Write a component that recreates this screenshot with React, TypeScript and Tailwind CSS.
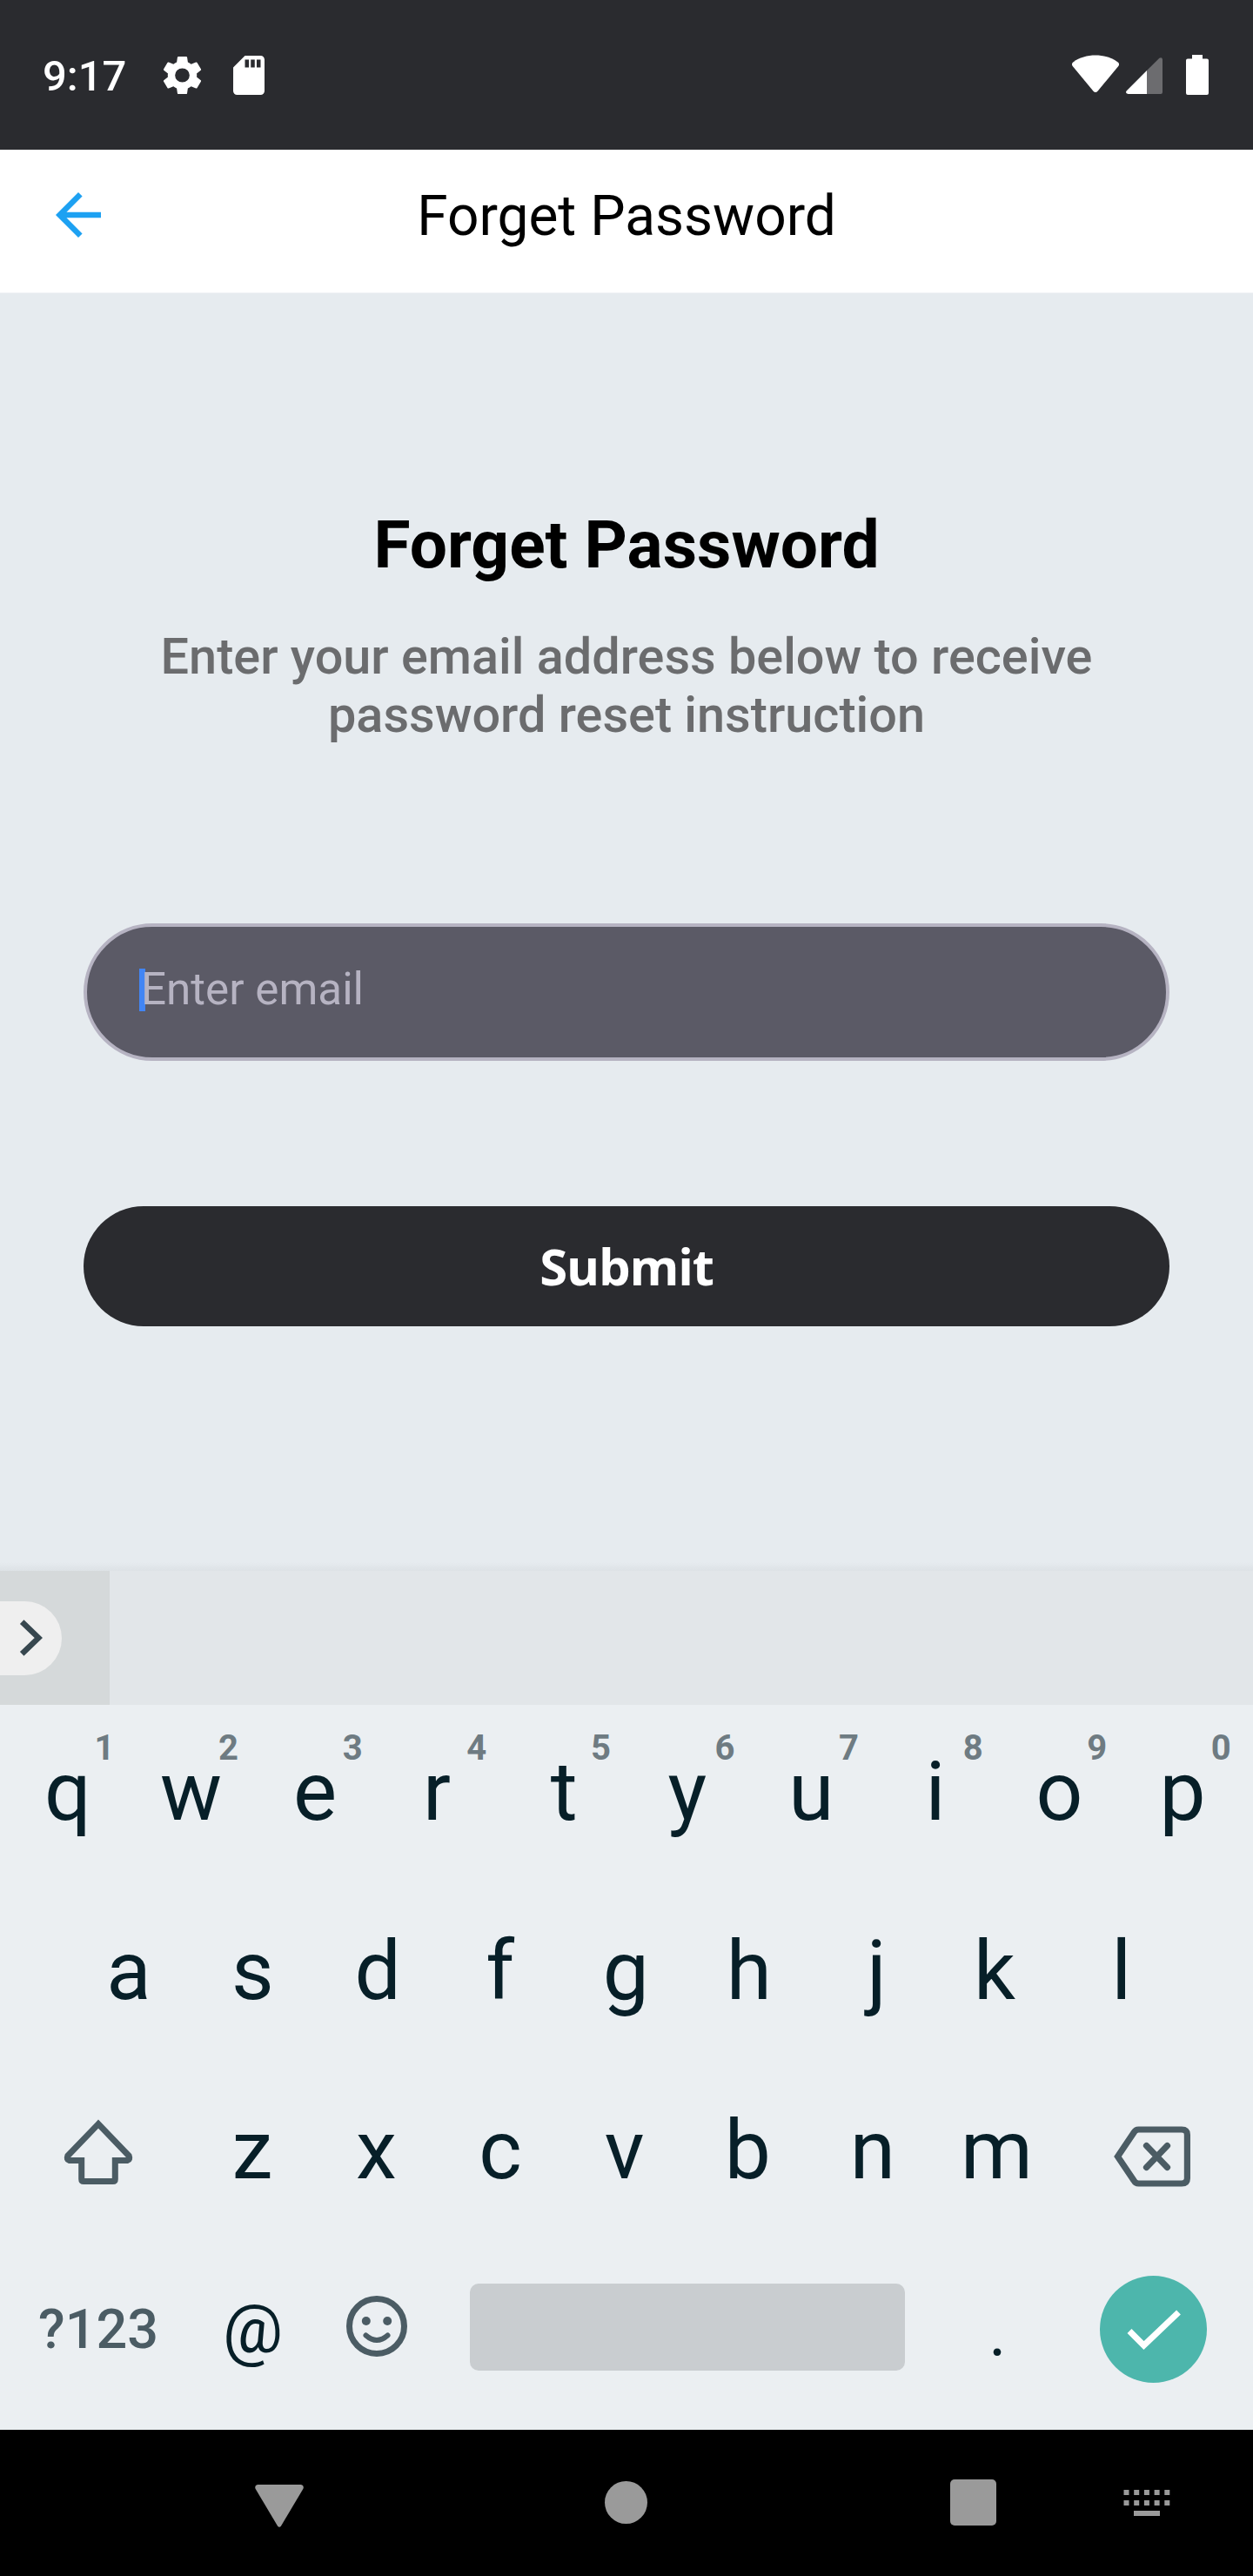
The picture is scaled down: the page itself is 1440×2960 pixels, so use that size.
import type { ReactNode } from "react";

const TOP_ROW = "qwertyuiop".split("");
const MIDDLE_ROW = "asdfghjkl".split("");
const BOTTOM_ROW = "zxcvbnm".split("");

const NUDGE: Record<string, string> = {
  q: "translate-x-[1px]",
  r: "-translate-x-[2.5px]",
  t: "translate-x-[1px]",
  d: "translate-x-[1px]",
  f: "-translate-x-[1px]",
  g: "translate-x-[1px]",
  j: "translate-x-[4px]",
  k: "-translate-x-[3px]",
  b: "-translate-x-[1px]",
  p: "-translate-x-[1px]",
};

function StatusBar() {
  return (
    <div className="flex h-[172px] items-start bg-[#2a2b2f] pl-[49px] pr-[51px] text-white">
      <span className="mt-[59px] w-[138px] text-[49px] font-medium leading-[58px]">9:17</span>
      <svg className="mt-[64px] h-[45px] w-[45px]" viewBox="2.3 2 19.4 20" preserveAspectRatio="none" fill="currentColor">
        <path d="M19.14 12.94c.04-.3.06-.61.06-.94 0-.32-.02-.64-.07-.94l2.03-1.58a.49.49 0 0 0 .12-.61l-1.92-3.32a.49.49 0 0 0-.59-.22l-2.39.96c-.5-.38-1.03-.7-1.62-.94l-.36-2.54a.48.48 0 0 0-.48-.41h-3.84c-.24 0-.43.17-.47.41l-.36 2.54c-.59.24-1.13.57-1.62.94l-2.39-.96a.48.48 0 0 0-.59.22L2.74 8.87c-.12.21-.08.47.12.61l2.03 1.58c-.05.3-.09.63-.09.94s.02.64.07.94l-2.03 1.58a.49.49 0 0 0-.12.61l1.92 3.32c.12.22.37.29.59.22l2.39-.96c.5.38 1.03.7 1.62.94l.36 2.54c.05.24.24.41.48.41h3.84c.24 0 .44-.17.47-.41l.36-2.54c.59-.24 1.13-.56 1.62-.94l2.39.96c.22.08.47 0 .59-.22l1.92-3.32c.12-.22.07-.47-.12-.61zM12 15.6A3.6 3.6 0 1 1 12 8.4a3.6 3.6 0 0 1 0 7.2z" />
      </svg>
      <svg className="ml-[36px] mt-[64px] h-[45px] w-[36px]" viewBox="4 2 16 20" fill="currentColor">
        <path d="M18 2h-8L4.02 8 4 20c0 1.1.9 2 2 2h12c1.1 0 2-.9 2-2V4c0-1.1-.9-2-2-2zm-6 6h-2V4h2zm3 0h-2V4h2zm3 0h-2V4h2z" />
      </svg>
      <svg className="ml-auto mt-[63px] h-[44px] w-[54px]" viewBox="0 0 54 44" fill="currentColor">
        <path d="M1.6 8.2C15.5-1.9 38.5-1.9 52.4 8.2Q55.2 10.3 53.3 12.9L29.7 41.5Q27 44.6 24.3 41.5L.7 12.9Q-1.2 10.3 1.6 8.2Z" />
      </svg>
      <svg className="ml-[8px] mt-[66px] h-[42px] w-[42px]" viewBox="0 0 42 42" fill="currentColor">
        <path d="M24 15V42H2.5Q-1.2 41.2.6 38.4Z" />
        <path d="M24 15L38.4.8Q41.4-.9 42 2.2V40Q42 42 40 42H24Z" fillOpacity=".31" />
      </svg>
      <svg className="ml-[27px] mt-[63px] h-[46px] w-[26px]" viewBox="0 0 26 46" fill="currentColor">
        <path d="M7 0H19V4.5H24Q26 4.5 26 6.5V44Q26 46 24 46H2Q0 46 0 44V6.5Q0 4.5 2 4.5H7Z" />
      </svg>
    </div>
  );
}

function Header() {
  return (
    <header className="flex h-[165px] items-start border-b border-[#f0f3f6] bg-white pl-[64px] pr-[64px]">
      <svg className="mt-[49px] h-[52px] w-[52px] text-[#1da1f2]" viewBox="4 4 16 16" fill="currentColor">
        <path d="M20 11H7.83l5.59-5.59L12 4l-8 8 8 8 1.41-1.41L7.83 13H20z" />
      </svg>
      <h2 className="mr-[52px] mt-[40px] flex-1 text-center text-[64px] leading-[74px] text-black">Forget Password</h2>
    </header>
  );
}

function Form() {
  return (
    <main className="flex h-[1458px] flex-col items-stretch bg-[#e6ebef] px-[96px]">
      <h1 className="mt-[244px] text-center text-[76.7px] font-bold leading-[90px] text-black">Forget Password</h1>
      <p className="mt-[50px] text-center text-[57.6px] font-medium leading-[67px] text-[#6b6c6e]">
        Enter your email address below to receive
        <br />
        password reset instruction
      </p>
      <div className="mt-[206px] flex h-[158px] shrink-0 items-start rounded-full border-4 border-[#b6b3c2] bg-[#5b5a66] pl-[60px] pt-[48px]">
        <span className="h-[49px] w-[7px] bg-[#4285f4]" />
        <span className="-ml-[5px] -mt-[6px] text-[51.2px] leading-[60px] text-[#b6b3c2]">Enter email</span>
      </div>
      <button className="mt-[167px] flex h-[138px] shrink-0 items-center justify-center rounded-full bg-[#2a2b2f] font-['Open_Sans',sans-serif] text-[58px] font-bold leading-[70px] tracking-[-1.2px] text-white">
        Submit
      </button>
    </main>
  );
}

function Key({ label, hint }: { label: string; hint?: string }) {
  return (
    <div className="relative flex h-[206px] w-[142.6px] justify-center">
      <span className={"mt-[45px] text-[94.5px] leading-[110px] " + (NUDGE[label] ?? "")}>{label}</span>
      {hint && (
        <span className="absolute left-[94.5px] top-[27px] w-[40px] text-center text-[40px] font-bold leading-[46px] text-[#6e7b82]">
          {hint}
        </span>
      )}
    </div>
  );
}

function Row({ className = "", children }: { className?: string; children: ReactNode }) {
  return <div className={"flex h-[206px] " + className}>{children}</div>;
}

function Keyboard() {
  return (
    <section className="h-[997px] bg-[#ebeff2] text-[#071f28]">
      <div className="h-[10px] bg-linear-to-b from-[#e6ebef] to-[#dde2e6]" />
      <div className="flex h-[154px] bg-[#e2e6e9]">
        <div className="flex w-[126px] items-center bg-[#d5d9da]">
          <div className="flex h-[85px] w-[71px] items-center rounded-r-full bg-[#efefef] pl-[22px]">
            <svg className="h-[42px] w-[28px]" viewBox="0 0 28 42" fill="none" stroke="#37474f" strokeWidth="6.5">
              <path d="M3.2 2.6L22.3 21L3.2 39.4" />
            </svg>
          </div>
        </div>
      </div>
      <Row className="pl-[5.5px]">
        {TOP_ROW.map((k, i) => (
          <Key key={k} label={k} hint={String((i + 1) % 10)} />
        ))}
      </Row>
      <Row className="pl-[76.6px]">
        {MIDDLE_ROW.map((k) => (
          <Key key={k} label={k} />
        ))}
      </Row>
      <Row>
        <div className="w-[218.6px] pl-[73px] pt-[64px]">
          <svg className="h-[76px] w-[80px]" viewBox="0 0 80 76" fill="none" stroke="#4b5c64" strokeWidth="7">
            <path d="M40 5.6L4.8 42.2Q3.2 46.5 6.5 47.5H20.7V69Q20.7 71.5 23.2 71.5H56.8Q59.3 71.5 59.3 69V47.5H73.5Q76.8 46.5 75.2 42.2Z" />
          </svg>
        </div>
        {BOTTOM_ROW.map((k) => (
          <Key key={k} label={k} />
        ))}
        <div className="pl-[63px] pt-[72px]">
          <svg className="h-[70px] w-[88px]" viewBox="0 0 88 70" fill="none" stroke="#4b5c64" strokeWidth="7.2">
            <path d="M4.5 35L23 7.5Q25 4 28.5 4H78Q84.4 4 84.4 10V60Q84.4 66 78 66H28.5Q25 66 23 62.5Z" />
            <path d="M37.5 22.5L61.5 47.5M61.5 22.5L37.5 47.5" strokeLinecap="round" />
          </svg>
        </div>
      </Row>
      <div className="flex items-start">
        <span className="ml-[44px] mt-[63px] w-[170px] text-[63px] font-medium leading-[74px] text-[#4b5c64]">?123</span>
        <span className="mt-[55px] w-[153px] text-center text-[77px] leading-[90px]">@</span>
        <svg className="ml-[31px] mt-[61px] h-[70px] w-[70px]" viewBox="0 0 70 70" fill="none" stroke="#4b5c64" strokeWidth="7">
          <circle cx="35" cy="35" r="31.5" />
          <path d="M22.5 45.5Q35 56.5 47.5 45.5" strokeWidth="6" strokeLinecap="round" />
          <circle cx="22.8" cy="29" r="5" fill="#4b5c64" stroke="none" />
          <circle cx="47.2" cy="29" r="5" fill="#4b5c64" stroke="none" />
        </svg>
        <div className="ml-[72px] mt-[47px] h-[100px] w-[500px] rounded-[10px] bg-[#c9cdd0]" />
        <span className="mt-[59px] w-[213px] text-center text-[77px] leading-[90px]">.</span>
        <div className="ml-[11px] mt-[38px] flex h-[123px] w-[123px] items-center justify-center rounded-full bg-[#4db6ac]">
          <svg className="h-[50px] w-[64px]" viewBox="0 0 64 50" fill="none" stroke="#ffffff" strokeWidth="7">
            <path d="M4 26.5L20.5 43L60.5 5" />
          </svg>
        </div>
      </div>
    </section>
  );
}

function NavBar() {
  return (
    <nav className="flex h-[168px] shrink-0 items-start bg-black text-[#9a9a9a]">
      <svg className="ml-[293px] mt-[63px] h-[49px] w-[56px]" viewBox="0 0 56 49" fill="currentColor">
        <path d="M3 0H53Q57 1 55.3 5L30 47.5Q28 50 26 47.5L.7 5Q-1 1 3 0Z" />
      </svg>
      <div className="ml-[346px] mt-[59px] h-[49px] w-[49px] rounded-full bg-current" />
      <div className="ml-[348px] mt-[57px] h-[53px] w-[53px] rounded-[5px] bg-current" />
      <svg className="ml-[146px] mt-[69px] h-[30px] w-[54px]" viewBox="0 0 54 30" fill="currentColor">
        {[0, 1, 2, 3, 4].map((i) => (
          <path key={i} d={`M${0.5 + i * 11.7} 0h6v6h-6zM${0.5 + i * 11.7} 12h6v6h-6z`} />
        ))}
        <path d="M12 24h30v6h-30z" />
      </svg>
    </nav>
  );
}

export default function App() {
  return (
    <div className="flex h-[2960px] w-[1440px] flex-col overflow-hidden bg-[#e6ebef] font-[Roboto,sans-serif]">
      <StatusBar />
      <Header />
      <Form />
      <Keyboard />
      <NavBar />
    </div>
  );
}
